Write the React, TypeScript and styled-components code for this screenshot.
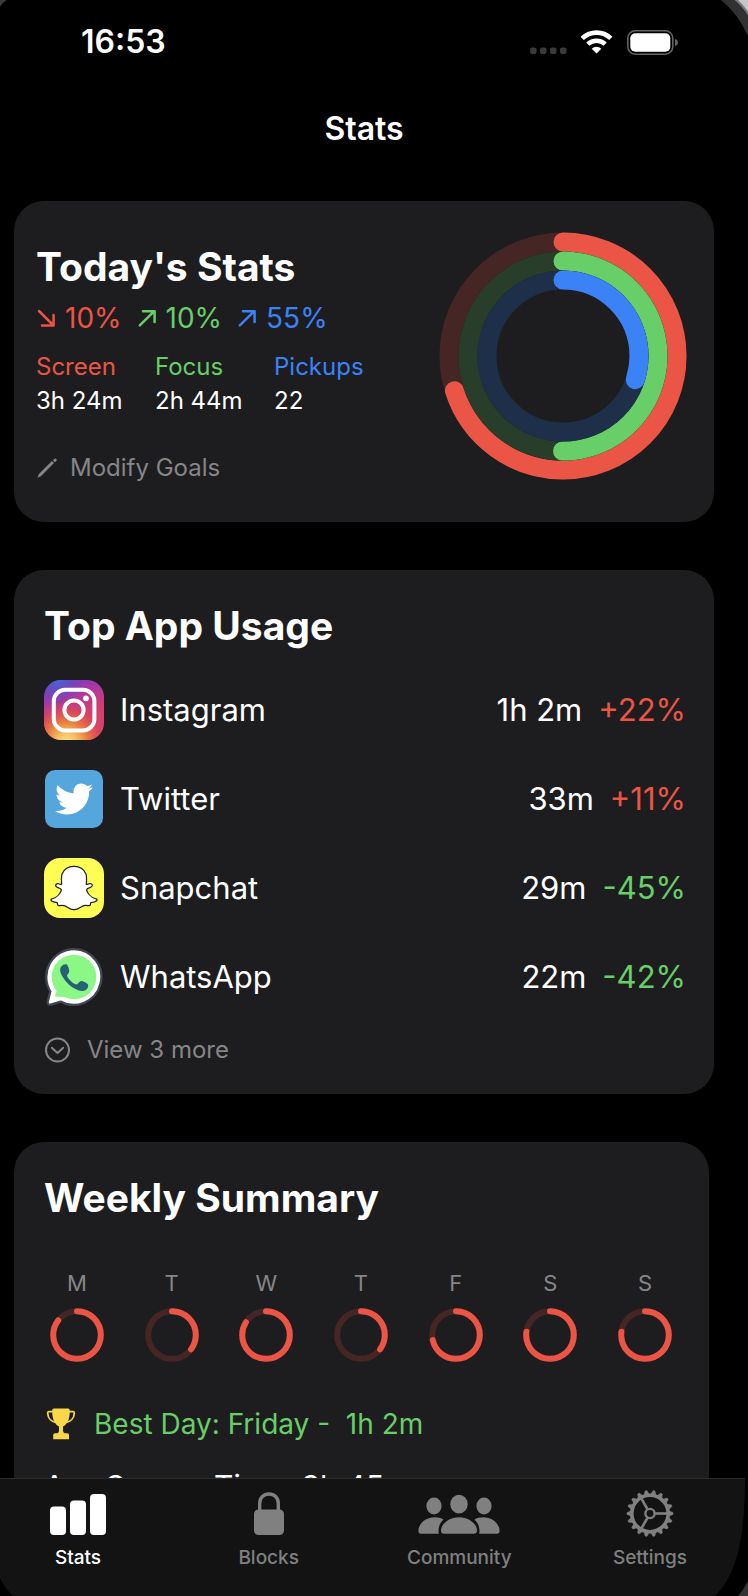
import React from "react";
import styled, { createGlobalStyle } from "styled-components";
import { FaTwitter, FaSnapchatGhost } from "react-icons/fa";

const RED = "#eb5545";
const GREEN = "#68ce67";
const BLUE = "#3b82f7";
const MUTED = "#868688";

const GlobalStyle = createGlobalStyle`
  * { box-sizing: border-box; }
  body {
    margin: 0;
    background: #000;
    color: #fff;
    font-family: Inter, "Liberation Sans", sans-serif;
  }
  h1, h2, p, dl, dt, dd, ul { margin: 0; padding: 0; }
  button { font: inherit; background: none; border: 0; padding: 0; cursor: pointer; }
  svg { display: block; flex: none; }
`;

const Screen = styled.div`
  position: relative;
  display: flex;
  flex-direction: column;
  height: 100vh;
  overflow: hidden;
  background: #000;
`;

const StatusBar = styled.header`
  display: flex;
  align-items: center;
  justify-content: space-between;
  flex: none;
  height: 84px;
  padding: 0 70px 0 81px;
`;

const Clock = styled.time`
  font-size: 32px;
  line-height: 40px;
  font-weight: 600;
`;

const StatusIcons = styled.div`
  display: flex;
  align-items: center;
  gap: 14px;
`;

const Content = styled.main`
  flex: 1;
  min-height: 0;
  overflow-y: auto;
  scrollbar-width: none;
  padding: 0 34px 40px 14px;
`;

const PageTitle = styled.h1`
  margin-bottom: 27px;
  font-size: 32px;
  line-height: 90px;
  font-weight: 600;
  text-align: center;
`;

const Card = styled.section`
  padding: 32px 28px 27px 30px;
  margin-bottom: 48px;
  border-radius: 30px;
  background: #1d1d1f;
`;

const TodayCard = styled(Card)`
  display: flex;
  align-items: flex-start;
  justify-content: space-between;
  padding: 31px 27px 37px 22px;
`;

const WeekCard = styled(Card)`
  margin-right: 5px;
`;

const TodayText = styled.div`
  padding-top: 11px;
`;

const CardTitle = styled.h2`
  font-size: 39px;
  line-height: 48px;
  font-weight: 700;
`;

const Trends = styled.div`
  display: flex;
  gap: 15px;
  margin: 10px 0 15px;
`;

const Trend = styled.span<{ $color: string }>`
  display: flex;
  align-items: center;
  gap: 9px;
  font-size: 28px;
  line-height: 34px;
  color: ${(p) => p.$color};
`;

const Metrics = styled.dl`
  display: grid;
  grid-template-columns: repeat(3, 119px);
  margin-bottom: 33px;
  font-size: 24px;
  line-height: 34px;
`;

const MetricName = styled.dt<{ $color: string }>`
  color: ${(p) => p.$color};
`;

const MetricValue = styled.dd`
  white-space: nowrap;
`;

const TextButton = styled.button<{ $gap: number }>`
  display: flex;
  align-items: center;
  gap: ${(p) => p.$gap}px;
  font-size: 24px;
  line-height: 34px;
  color: ${MUTED};
`;

const AppList = styled.ul`
  margin: 15px 0 12px;
  list-style: none;
`;

const AppRow = styled.li`
  display: flex;
  align-items: center;
  height: 89px;
  font-size: 31px;
  line-height: 40px;
`;

const AppIcon = styled.span`
  display: grid;
  place-items: center;
  width: 60px;
  margin-right: 16px;
`;

const TwitterTile = styled.span`
  display: grid;
  place-items: center;
  width: 58px;
  height: 58px;
  border-radius: 10px;
  background: #54a6dd;
`;

const SnapTile = styled.span`
  display: grid;
  place-items: center;
  width: 60px;
  height: 60px;
  border-radius: 16px;
  background: #fefd54;

  path {
    fill: #fff;
    stroke: #222;
    stroke-width: 14px;
  }
`;

const AppName = styled.span`
  flex: 1;
`;

const AppChange = styled.span<{ $up: boolean }>`
  margin-left: 16px;
  color: ${(p) => (p.$up ? RED : GREEN)};
`;

const Week = styled.ul`
  display: flex;
  justify-content: space-between;
  margin: 46px 0 45px;
  padding: 0 9px 0 6px;
  list-style: none;
`;

const Day = styled.li`
  display: flex;
  flex-direction: column;
  align-items: center;
  gap: 10px;
  width: 54px;
  font-size: 22px;
  line-height: 30px;
  color: ${MUTED};
`;

const BestDay = styled.p`
  display: flex;
  align-items: center;
  gap: 18px;
  margin-bottom: 28px;
  padding-left: 2px;
  font-size: 28px;
  line-height: 34px;
  white-space: pre;
  color: ${GREEN};
`;

const Average = styled.p`
  font-size: 30px;
  line-height: 34px;
`;

const TabBar = styled.nav`
  display: flex;
  align-items: flex-start;
  justify-content: space-between;
  flex: none;
  height: 118px;
  padding: 10px 40px 0 23px;
  margin-right: 3px;
  border-top: 1px solid #2b2b2b;
  background: #131313;
`;

const Tab = styled.a<{ $active?: boolean }>`
  display: flex;
  flex-direction: column;
  align-items: center;
  gap: 9px;
  width: 110px;
  font-size: 19px;
  line-height: 24px;
  font-weight: 500;
  text-decoration: none;
  color: ${(p) => (p.$active ? "#fff" : "#808080")};
`;

const Corner = styled.svg<{ $v: "top" | "bottom"; $h: "left" | "right" }>`
  position: absolute;
  ${(p) => p.$v}: 0;
  ${(p) => p.$h}: 0;
  pointer-events: none;
`;

type RingProps = { c: number; r: number; width: number; value: number; color: string; track: string };

function Ring({ c, r, width, value, color, track }: RingProps) {
  const length = 2 * Math.PI * r;
  return (
    <g fill="none" strokeWidth={width} transform={`rotate(-90 ${c} ${c})`}>
      <circle cx={c} cy={c} r={r} stroke={track} />
      <circle
        cx={c}
        cy={c}
        r={r}
        stroke={color}
        strokeLinecap="round"
        strokeDasharray={`${length * value} ${length}`}
      />
    </g>
  );
}

function TrendArrow({ down }: { down?: boolean }) {
  return (
    <svg width="20" height="20" viewBox="0 0 20 20" fill="none" stroke="currentColor" strokeWidth="2.5" strokeLinecap="round" strokeLinejoin="round">
      {down ? <path d="M3 3L17 17M17.6 7V17.6H6" /> : <path d="M2.8 17.4L17 3.4M6 3.2H17.6V14" />}
    </svg>
  );
}

function WifiIcon() {
  return (
    <svg width="32" height="24" viewBox="0 0 32 24" fill="none" stroke="#fff" strokeWidth="4.6">
      <path d="M1.2 8.4A20.6 20.6 0 0 1 29.8 8.4" />
      <path d="M6.8 14.2A12.6 12.6 0 0 1 24.2 14.2" />
      <path d="M15.5 23.6L10.7 18.7A6.8 6.8 0 0 1 20.3 18.7Z" fill="#fff" stroke="none" />
    </svg>
  );
}

function BatteryIcon() {
  return (
    <svg width="51" height="25" viewBox="0 0 51 25">
      <rect x="0.8" y="0.8" width="45" height="23.4" rx="7.5" fill="none" stroke="#636363" strokeWidth="1.6" />
      <rect x="3.3" y="3.3" width="40" height="18.4" rx="5" fill="#fff" />
      <path d="M48 9Q51 10 51 12.5T48 16Z" fill="#636363" />
    </svg>
  );
}

function SignalDots() {
  return (
    <svg width="37" height="25" viewBox="0 0 37 25" fill="#3a3a3a">
      {[0, 10, 20, 30].map((x) => (
        <rect key={x} x={x} y="17.5" width="6.5" height="6.5" rx="2" />
      ))}
    </svg>
  );
}

function PencilIcon() {
  return (
    <svg width="22" height="22" viewBox="0 0 22 22" fill="currentColor">
      <path d="M1.5 20.8L2.9 17L16 4.1L18 6.1L4.9 19.2L1.5 20.8Z" />
      <path d="M16.9 3.3L18.3 1.9Q19.3 1.1 20.3 2Q21.1 2.9 20.3 3.9L18.9 5.3Z" />
    </svg>
  );
}

function InstagramIcon() {
  return (
    <svg width="60" height="60" viewBox="0 0 60 60">
      <defs>
        <linearGradient id="ig-base" x1="0.15" y1="0" x2="0.5" y2="1">
          <stop offset="0" stopColor="#6a3fc0" />
          <stop offset="0.3" stopColor="#a838a5" />
          <stop offset="0.65" stopColor="#d53d70" />
          <stop offset="1" stopColor="#d9446c" />
        </linearGradient>
        <radialGradient id="ig-warm" cx="0.38" cy="1.05" r="0.72">
          <stop offset="0" stopColor="#fbe28a" />
          <stop offset="0.22" stopColor="#f5c467" />
          <stop offset="0.5" stopColor="#e97b3f" />
          <stop offset="0.78" stopColor="#dc4659" stopOpacity="0.75" />
          <stop offset="1" stopColor="#cf3a76" stopOpacity="0" />
        </radialGradient>
        <radialGradient id="ig-cool" cx="0.22" cy="0" r="0.45">
          <stop offset="0" stopColor="#4a66d4" />
          <stop offset="1" stopColor="#5b44c4" stopOpacity="0" />
        </radialGradient>
      </defs>
      <rect width="60" height="60" rx="17" fill="url(#ig-base)" />
      <rect width="60" height="60" rx="17" fill="url(#ig-warm)" />
      <rect width="60" height="60" rx="17" fill="url(#ig-cool)" />
      <g fill="none" stroke="#fff" strokeWidth="4">
        <rect x="9.8" y="9.8" width="40.6" height="40.6" rx="11.5" />
        <circle cx="30" cy="30" r="9.6" />
      </g>
      <circle cx="42" cy="18.3" r="2.9" fill="#fff" />
    </svg>
  );
}

function WhatsAppIcon() {
  const bubble = "M29 3.5A25.5 25.5 0 1 1 16 51.2L5 54.3L7.8 43A25.5 25.5 0 0 1 29 3.5Z";
  return (
    <svg width="58" height="58" viewBox="0 0 58 58" strokeLinejoin="round">
      <path d={bubble} fill="#3f4851" stroke="#3f4851" strokeWidth="7" />
      <path d={bubble} fill="#fff" stroke="#fff" strokeWidth="2.4" />
      <circle cx="29" cy="29" r="22.3" fill="#8bf785" />
      <path d="M10 48.5L13 38L21 49Z" fill="#8bf785" />
      <path
        d="M16.2 18.6C17.8 16.3 20.5 15.6 22 16.6C23 18 24.4 21.5 24.2 23.6C24 25.4 22.2 26.5 22 27.7C23.4 31.5 27.6 35.2 31.4 36.6C32.8 36.4 34.3 33.4 36 33C38.3 33 41.8 35 43 36.6C43.7 38.5 42.5 41.2 40.6 42.2C37.6 43.7 34.2 42.8 31 41.3C24.5 38.2 18.6 31.8 15.8 25.2C14.8 22.6 14.9 20.3 16.2 18.6Z"
        fill="#256273"
      />
    </svg>
  );
}

function MoreIcon() {
  return (
    <svg width="26" height="26" viewBox="0 0 26 26" fill="none" stroke="currentColor" strokeWidth="2" strokeLinecap="round" strokeLinejoin="round">
      <circle cx="13.5" cy="13" r="11.5" />
      <path d="M7.8 10.7L13.5 16L19.2 10.7" />
    </svg>
  );
}

function TrophyIcon() {
  return (
    <svg width="30" height="32" viewBox="0 0 30 32" fill="#f8d74a">
      <path d="M6.2 2.4Q6.2 0.5 8 0.5H22Q23.8 0.5 23.8 2.4C23.8 10.5 22 15.5 17 18.6V22.5Q17 24.6 18.6 25.2H21.4Q23 25.2 23 27V31.3H7.2V27Q7.2 25.2 8.8 25.2H11.4Q13 24.6 13 22.5V18.6C8 15.5 6.2 10.5 6.2 2.4Z" />
      <path d="M7 3.6H3Q1.6 3.6 1.7 5.2C2 10.2 5.5 13.8 10 14.4M23 3.6H27Q28.4 3.6 28.3 5.2C28 10.2 24.5 13.8 20 14.4" fill="none" stroke="#f8d74a" strokeWidth="1.8" />
    </svg>
  );
}

function BarsIcon() {
  return (
    <svg width="56" height="48" viewBox="0 0 56 48" fill="currentColor">
      <rect x="0" y="17.5" width="16" height="28.5" rx="4" />
      <rect x="20" y="11.5" width="16" height="34.5" rx="4" />
      <rect x="40" y="5" width="16" height="41" rx="4" />
    </svg>
  );
}

function LockIcon() {
  return (
    <svg width="30" height="48" viewBox="0 0 30 48">
      <rect y="20.5" width="30" height="25.5" rx="4.5" fill="currentColor" />
      <path d="M5.7 22V14.5C5.7 8.5 9.8 5 15 5S24.3 8.5 24.3 14.5V22" fill="none" stroke="currentColor" strokeWidth="3.4" />
    </svg>
  );
}

function PeopleIcon() {
  return (
    <svg width="82" height="48" viewBox="0 0 82 48" fill="currentColor">
      <ellipse cx="16" cy="17" rx="7.6" ry="8.4" />
      <ellipse cx="66" cy="17" rx="7.6" ry="8.4" />
      <ellipse cx="41" cy="15.2" rx="8.7" ry="9.4" />
      <path d="M16.5 28.2C20.3 28.2 23.4 29 25.5 30.6C21.8 34 19.8 38.8 20.8 44.7H3Q0.4 44.7 0.4 42C0.4 35 7.5 28.2 16.5 28.2Z" />
      <path d="M65.5 28.2C61.7 28.2 58.6 29 56.5 30.6C60.2 34 62.2 38.8 61.2 44.7H79Q81.6 44.7 81.6 42C81.6 35 74.5 28.2 65.5 28.2Z" />
      <path d="M41 28.2C51 28.2 59 35 59 41.5Q59 44.7 56 44.7H26Q23 44.7 23 41.5C23 35 31 28.2 41 28.2Z" />
    </svg>
  );
}

function GearIcon() {
  const teeth = Array.from({ length: 18 }, (_, i) => i * 20);
  return (
    <svg width="48" height="48" viewBox="0 0 48 48" fill="none" stroke="currentColor">
      <circle cx="24" cy="24.5" r="18.2" strokeWidth="3.6" />
      <circle cx="24" cy="24.5" r="4.6" strokeWidth="2.4" />
      {[0, 120, 240].map((a) => (
        <path key={a} d="M28.6 24.5H42" strokeWidth="2.6" transform={`rotate(${a} 24 24.5)`} />
      ))}
      {teeth.map((a) => (
        <path key={a} d="M43 22L47 23.6V25.4L43 27Z" fill="currentColor" strokeWidth="0.6" strokeLinejoin="round" transform={`rotate(${a} 24 24.5)`} />
      ))}
    </svg>
  );
}

function BezelCorners() {
  return (
    <>
      <Corner $v="top" $h="left" width="8" height="8" viewBox="0 0 8 8">
        <path d="M0 0H6.5Q3 2.5 0 6.5Z" fill="#3a3a3a" />
      </Corner>
      <Corner $v="top" $h="right" width="28" height="38" viewBox="0 0 28 38">
        <path d="M1 0Q17.5 13 28 36V0Z" fill="#313131" />
        <path d="M14.5 0Q22 6 28 15.5V0Z" fill="#77777a" />
        <path d="M18 0Q23.5 5 28 11.5V0Z" fill="#c6c6c8" />
      </Corner>
      <Corner $v="bottom" $h="left" width="14" height="18" viewBox="0 0 14 18">
        <path d="M0 0Q5 10 13 18H0Z" fill="#000" />
      </Corner>
      <Corner $v="bottom" $h="right" width="34" height="112" viewBox="0 0 34 112">
        <path d="M31 0C30 50 25 88 1 112H34V0Z" fill="#000" />
        <path d="M34 97Q30 105 24 112H34Z" fill="#333" />
      </Corner>
    </>
  );
}

const apps = [
  { name: "Instagram", time: "1h 2m", change: "+22%", icon: <InstagramIcon /> },
  { name: "Twitter", time: "33m", change: "+11%", icon: <TwitterTile><FaTwitter size={38} color="#fff" /></TwitterTile> },
  { name: "Snapchat", time: "29m", change: "-45%", icon: <SnapTile><FaSnapchatGhost size={46} overflow="visible" /></SnapTile> },
  { name: "WhatsApp", time: "22m", change: "-42%", icon: <WhatsAppIcon /> },
];

const days = [
  { label: "M", value: 0.85 },
  { label: "T", value: 0.35 },
  { label: "W", value: 0.835 },
  { label: "T", value: 0.35 },
  { label: "F", value: 0.71 },
  { label: "S", value: 0.768 },
  { label: "S", value: 0.768 },
];

export default function App() {
  return (
    <Screen>
      <GlobalStyle />
      <StatusBar>
        <Clock>16:53</Clock>
        <StatusIcons>
          <SignalDots />
          <WifiIcon />
          <BatteryIcon />
        </StatusIcons>
      </StatusBar>

      <Content>
        <PageTitle>Stats</PageTitle>

        <TodayCard>
          <TodayText>
            <CardTitle>Today's Stats</CardTitle>
            <Trends>
              <Trend $color={RED}><TrendArrow down />10%</Trend>
              <Trend $color={GREEN}><TrendArrow />10%</Trend>
              <Trend $color={BLUE}><TrendArrow />55%</Trend>
            </Trends>
            <Metrics>
              <div>
                <MetricName $color={RED}>Screen</MetricName>
                <MetricValue>3h 24m</MetricValue>
              </div>
              <div>
                <MetricName $color={GREEN}>Focus</MetricName>
                <MetricValue>2h 44m</MetricValue>
              </div>
              <div>
                <MetricName $color={BLUE}>Pickups</MetricName>
                <MetricValue>22</MetricValue>
              </div>
            </Metrics>
            <TextButton $gap={12}><PencilIcon />Modify Goals</TextButton>
          </TodayText>
          <svg width="248" height="248" viewBox="0 0 248 248" role="img" aria-label="Goal progress">
            <Ring c={124} r={114} width={19} value={0.7} color={RED} track="#462624" />
            <Ring c={124} r={95} width={19} value={0.5} color={GREEN} track="#283e2a" />
            <Ring c={124} r={76} width={19} value={0.3} color={BLUE} track="#1e2f49" />
          </svg>
        </TodayCard>

        <Card>
          <CardTitle>Top App Usage</CardTitle>
          <AppList>
            {apps.map((app) => (
              <AppRow key={app.name}>
                <AppIcon>{app.icon}</AppIcon>
                <AppName>{app.name}</AppName>
                <span>{app.time}</span>
                <AppChange $up={app.change.startsWith("+")}>{app.change}</AppChange>
              </AppRow>
            ))}
          </AppList>
          <TextButton $gap={17}><MoreIcon />View 3 more</TextButton>
        </Card>

        <WeekCard>
          <CardTitle>Weekly Summary</CardTitle>
          <Week>
            {days.map((day, i) => (
              <Day key={i}>
                {day.label}
                <svg width="54" height="54" viewBox="0 0 54 54">
                  <Ring c={27} r={23.8} width={6} value={day.value} color={RED} track="#462624" />
                </svg>
              </Day>
            ))}
          </Week>
          <BestDay><TrophyIcon />{"Best Day: Friday -  1h 2m"}</BestDay>
          <Average>Avg Screen Time: 3h 45m</Average>
        </WeekCard>
      </Content>

      <TabBar>
        <Tab href="#stats" $active aria-current="page"><BarsIcon />Stats</Tab>
        <Tab href="#blocks"><LockIcon />Blocks</Tab>
        <Tab href="#community"><PeopleIcon />Community</Tab>
        <Tab href="#settings"><GearIcon />Settings</Tab>
      </TabBar>
      <BezelCorners />
    </Screen>
  );
}
